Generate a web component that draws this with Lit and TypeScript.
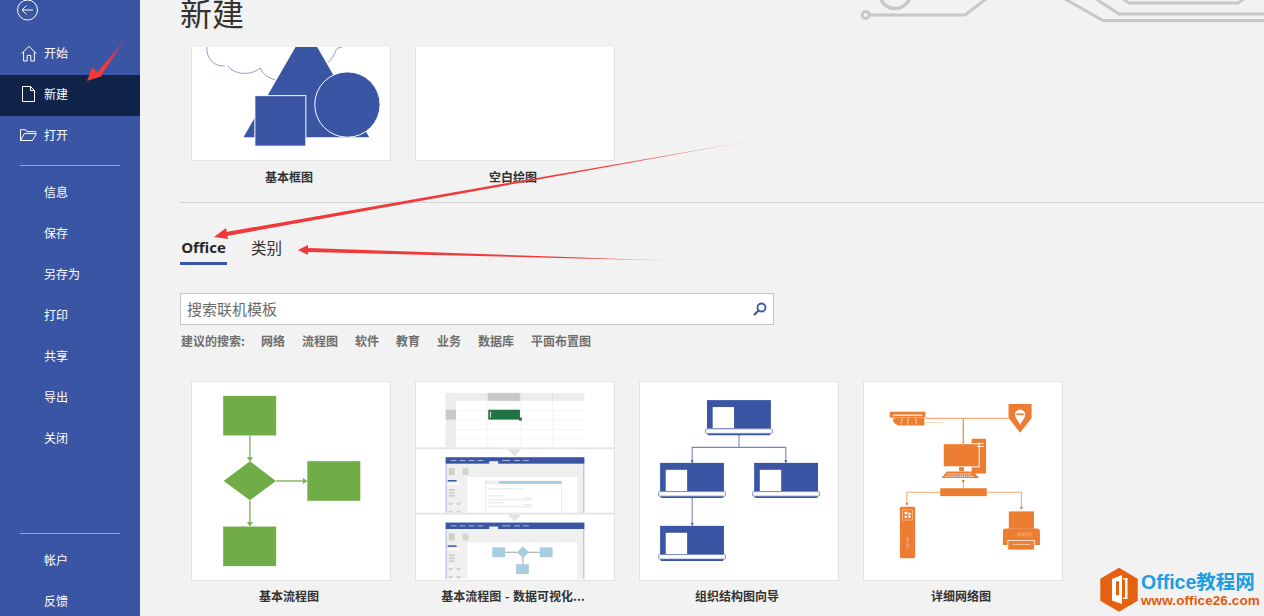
import { LitElement, html, css, svg } from "lit";
import { customElement } from "lit/decorators.js";

const BLUE = "#3955a3";
const GREEN = "#70ad47";
const ORANGE = "#ed7d31";

const homeIcon = svg`<svg width="16" height="17" viewBox="0 0 16 17" fill="none" stroke="#fff" stroke-width="1"><path d="M.7 8.6 8 1.2l7.3 7.4M2.6 7v9h3.6v-5.6h3.6V16h3.6V7"/></svg>`;
const pageIcon = svg`<svg width="13" height="16" viewBox="0 0 13 16" fill="none" stroke="#fff" stroke-width="1"><path d="M.5.5h8l4 4v11H.5zM8.5.5v4h4"/></svg>`;
const openIcon = svg`<svg width="17" height="12" viewBox="0 0 17 12" fill="none" stroke="#fff" stroke-width="1"><path d="M.5 11.5V.7h5l1.3 2h9.4M.5 11.5h12l3.9-6.9H4.3z"/></svg>`;

const flow = svg`<svg viewBox="0 0 200 200" class="art">
  <g fill="${GREEN}">
    <rect x="31.500" y="14" width="53.500" height="40"/>
    <path d="M58.500 80 84.700 100 58.500 119.500 32 100z"/>
    <rect x="116.500" y="80" width="53.500" height="40"/>
    <rect x="31.500" y="146" width="53.500" height="40"/>
    <path d="M55.500 76h6l-3 4.500zM55.500 141.500h6l-3 4.500zM112 97v6l4.500-3z"/>
  </g>
  <path d="M58.500 54v24M58.500 120v24M85 100h29" stroke="#86bb63" stroke-width="1.500" fill="none"/>
</svg>`;

const winPanel = (y: number, content: unknown) => svg`<g transform="translate(0 ${y})">
  <rect x="30" y="0" width="140" height="57" fill="#f0f0f0"/>
  <path d="M30.500 0v57M169.500 0v57" stroke="#aab8de" stroke-width="1"/>
  <rect x="30" y="0" width="140" height="6.500" fill="${BLUE}"/>
  <rect x="74" y="4" width="9" height="3" fill="#f0f0f0"/>
  <path d="M35 3.300h6M44 3.300h6M53 3.300h6M62 3.300h6M87 3.300h8M99 3.300h6M108 3.300h6" stroke="#c6d0ec" stroke-width=".8"/>
  <rect x="33" y="11" width="6" height="7" fill="#cfcfc4"/>
  <rect x="47" y="11" width="6" height="7" fill="#cfd6cc"/>
  <rect x="32" y="23" width="9" height="1.500" fill="${BLUE}"/>
  <rect x="32" y="26" width="12" height="2" fill="#fff"/>
  <path d="M33 33h6M33 36h6M33 39h6M33 47h4M41 47h4M33 55h4M41 55h4" stroke="#d2d2d2" stroke-width="2"/>
  <rect x="52" y="20" width="111" height="37" fill="#fff"/>
  ${content}
</g>`;

const dataViz = svg`<svg viewBox="0 0 200 200" class="art">
  <rect x="30" y="11" width="140" height="8" fill="#ececec"/>
  <rect x="30" y="11" width="10.500" height="55" fill="#ececec"/>
  <rect x="72.500" y="11" width="32.500" height="8" fill="#c8c8c8"/>
  <rect x="30" y="28" width="10.500" height="10" fill="#c8c8c8"/>
  <path d="M105.500 19v47M138 19v47M72.500 19v47M40.500 29h130M40.500 38.500h130M40.500 48h130M40.500 57h130M30 48h10M30 57h10" stroke="#f0f0f0" stroke-width=".7" fill="none"/>
  <path d="M105 11v8M138 11v8" stroke="#d8d8d8" stroke-width=".7"/>
  <rect x="73" y="28" width="32" height="10" fill="#217346"/>
  <rect x="75" y="30" width=".8" height="6" fill="#fff"/>
  <rect x="104" y="36" width="3" height="3" fill="#217346"/>
  <rect x="0" y="66" width="200" height="2" fill="#e6e6e6"/>
  <path d="M92.500 68h14l-7 7z" fill="#e2e2e2"/>
  ${winPanel(76, svg`
    <rect x="70" y="24" width="77" height="33" fill="none" stroke="#e0e0e0" stroke-width=".6"/>
    <rect x="70" y="24" width="77" height="3" fill="#a9cde0"/>
    <rect x="70" y="24" width="14" height="3" fill="#e8f0f5"/>
    <path d="M73 32h35M73 39h16M73 46h16M108 41h9M108 48h9M72 43h45M72 50h45" stroke="#d8d8d8" stroke-width=".7"/>`)}
  <rect x="0" y="132" width="200" height="2" fill="#e6e6e6"/>
  <path d="M92.500 134h14l-7 7z" fill="#e2e2e2"/>
  ${winPanel(142, svg`
    <path d="M90 30h35M108 32v12" stroke="#777" stroke-width=".7"/>
    <g fill="#a9cde0">
      <rect x="77" y="25" width="13" height="10"/>
      <path d="M108 24 114 30 108 36 102 30z"/>
      <rect x="125" y="25" width="13" height="10"/>
      <rect x="101" y="42" width="13" height="10"/>
    </g>`)}
</svg>`;

const orgBox = (x: number, y: number) => svg`<g transform="translate(${x} ${y})">
  <rect x="0" y="0" width="64.500" height="29" fill="${BLUE}"/>
  <rect x="5.700" y="7" width="21.600" height="21.500" fill="#fff"/>
  <rect x=".5" y="31" width="63.500" height="4.500" rx="1" fill="${BLUE}"/>
  <rect x="-1.500" y="29" width="67.500" height="4.600" rx="1" fill="#fff" stroke="#5f78b8" stroke-width=".8"/>
</g>`;

const org = svg`<svg viewBox="0 0 200 200" class="art">
  <path d="M100 52v14M52.700 81V66h94.600v15M52.700 112v32" fill="none" stroke="#6f86bf" stroke-width="1.100"/>
  <path d="M51.200 79h3l-1.500 3zM145.800 79h3l-1.500 3zM51.200 142.500h3l-1.500 3z" fill="${BLUE}"/>
  ${orgBox(67.700, 18.300)}
  ${orgBox(20.300, 81.700)}
  ${orgBox(115.300, 81.700)}
  ${orgBox(20.300, 145.300)}
</svg>`;

const net = svg`<svg viewBox="0 0 200 200" class="art">
  <path d="M62 36.700h84M100.300 36.700V62M100.300 99v8M77 111.300H43.300V122M124 111.300h35v15" fill="none" stroke="#f3a878" stroke-width="1.100"/>
  <path d="M100.300 36.700V62" fill="none" stroke="${ORANGE}" stroke-width=".8"/>
  <g fill="${ORANGE}">
    <circle cx="100.300" cy="62" r="1.300"/><circle cx="100.300" cy="100" r="1.300"/>
    <circle cx="43.300" cy="123" r="1.300"/><circle cx="159" cy="127" r="1.300"/>
    <rect x="26" y="30" width="36" height="6" />
    <path d="M31 36h30v8H35l-4-2-2-3z"/>
    <path d="M146 22.300h23.300v14l-11.600 15-11.700-15z"/>
    <rect x="108.700" y="57.300" width="14.600" height="35" rx="1"/>
    <rect x="80" y="62.300" width="36.300" height="23.400" stroke="#fff" stroke-width="1"/>
    <path d="M96 86h5v4h-5z"/>
    <path d="M83.700 90.500h26.600l6 6.500h-38z"/>
    <rect x="77" y="107.300" width="47" height="8"/>
    <rect x="36.300" y="126" width="15.400" height="52" rx="1.500"/>
    <rect x="146.300" y="130.700" width="25.400" height="17.500"/>
    <path d="M143 148h31.700a3 3 0 0 1 3 3v13.700h-37.400V151a3 3 0 0 1 2.700-3z"/>
    <rect x="145.300" y="160" width="26.700" height="9.700" stroke="#fff" stroke-width=".8"/>
  </g>
  <path d="M29 33.500h30" stroke="#fff" stroke-width="1.200"/>
  <path d="M39 36l-2 7M45 36l-1 7M52 36l1 7" stroke="#fff" stroke-width=".6"/>
  <path d="M62 41h18" stroke="#f6c8a8" stroke-width=".8"/>
  <path d="M152.500 33a5.200 5.200 0 1 1 10.400 0c0 3-3.500 6-5.200 10.500-1.700-4.500-5.200-7.500-5.200-10.500z" fill="#fff"/>
  <rect x="154" y="31.800" width="7.400" height="1.600" fill="${ORANGE}"/>
  <path d="M113 62h8M113 65h8" stroke="#fff" stroke-width="1"/>
  <rect x="82.500" y="64.800" width="31.300" height="18.400" fill="none" stroke="${ORANGE}" stroke-width="1"/>
  <path d="M84 93h25M82 95.300h29" stroke="#fff" stroke-width=".9" stroke-dasharray="1.400 .7"/>
  <rect x="38.700" y="129" width="10.400" height="10.400" fill="none" stroke="#f6c8a8" stroke-width=".7"/>
  <path d="M41 131h3v2.500h-3zM44.800 132h2.500v2h-2.500zM41 135h2.500v2H41zM44.500 135h2.500v2h-2.500z" fill="#fff"/>
  <path d="M44 157v11" stroke="#f3a878" stroke-width="2.500" stroke-dasharray="1 .7"/>
  <g fill="none" stroke="#f6c8a8" stroke-width=".7"><circle cx="157" cy="154" r="1.700"/><circle cx="162" cy="154" r="1.700"/><circle cx="167" cy="154" r="1.700"/></g>
  <path d="M150 164h18" stroke="#fff" stroke-width=".6"/>
</svg>`;

const basic = svg`<svg viewBox="0 0 200 200" class="art">
  <g transform="translate(0 1.500)">
    <path d="M15 84C14 97 23 105 33 104M36 104C42 112 58 115 69 106M69 106C71 112 77 116 84 118M137 101C141 98 144 92 146 87 147 86 150 85 152 85" fill="none" stroke="#6f86bf" stroke-width=".8"/>
    <path d="M115.500 66 179 176H52z" fill="${BLUE}"/>
    <rect x="63.500" y="134" width="51.500" height="51" fill="${BLUE}" stroke="#fff" stroke-width="1"/>
    <circle cx="157" cy="143" r="33" fill="${BLUE}" stroke="#fff" stroke-width="1"/>
  </g>
</svg>`;

const NAV_TOP = [{ t: "开始", i: homeIcon }, { t: "新建", i: pageIcon, active: true }, { t: "打开", i: openIcon }];
const NAV_MID = ["信息", "保存", "另存为", "打印", "共享", "导出", "关闭"];
const NAV_BOT = ["帐户", "反馈"];
const SUGGEST = ["网络", "流程图", "软件", "教育", "业务", "数据库", "平面布置图"];
const CARDS = [
  { t: "基本流程图", a: flow },
  { t: "基本流程图 - 数据可视化...", a: dataViz },
  { t: "组织结构图向导", a: org },
  { t: "详细网络图", a: net },
];

@customElement("app-root")
export class AppRoot extends LitElement {
  static styles = css`
    :host {
      display: flex;
      position: relative;
      width: 100%;
      height: 616px;
      overflow: hidden;
      background: #f2f2f2;
      font-family: "Noto Sans CJK SC", "Noto Sans", sans-serif;
      color: #262626;
    }
    .side {
      width: 140px;
      flex: none;
      height: 616px;
      overflow: hidden;
      background: #3a55a3;
      color: #fff;
      font-size: 12px;
    }
    .back {
      height: 35px;
      padding-left: 17px;
    }
    .back svg {
      display: block;
      margin-top: -1px;
    }
    .item {
      display: flex;
      align-items: center;
      box-sizing: border-box;
      height: 41px;
      padding-left: 44px;
      position: relative;
    }
    .item.top {
      padding-bottom: 4px;
    }
    .item.active {
      background: #10244a;
    }
    .ico {
      position: absolute;
      left: 20px;
      top: 0;
      bottom: 3px;
      width: 17px;
      display: flex;
      align-items: center;
      justify-content: center;
    }
    .rule {
      height: 1px;
      width: 100px;
      margin-left: 20px;
      background: #8ea3e0;
    }
    .rule.a { margin-top: 8px; margin-bottom: 5px; }
    .rule.b { margin-top: 75px; margin-bottom: 5px; }
    .main {
      flex: 1;
      min-width: 0;
      padding-left: 40px;
    }
    h1 {
      margin: -4px 0 0;
      font-size: 32px;
      line-height: 32px;
      font-weight: 400;
      color: #333;
    }
    .gallery {
      display: flex;
      gap: 24px;
      padding-left: 11px;
    }
    .cell { width: 200px; }
    .clip {
      margin-top: 19px;
      height: 114px;
      overflow: hidden;
      display: flex;
      align-items: flex-end;
    }
    .card {
      width: 200px;
      height: 200px;
      flex: none;
      box-sizing: border-box;
      background: #fff;
      border: 1px solid #e3e3e3;
    }
    .clip .card { border-top: 0; }
    .art { display: block; width: 198px; height: 198px; }
    .clip .art { height: 199px; }
    .label {
      box-sizing: border-box;
      padding-right: 4px;
      height: 18px;
      line-height: 18px;
      margin-top: 7px;
      text-align: center;
      font-size: 12px;
      font-weight: 700;
      color: #333;
      white-space: nowrap;
      word-spacing: 1px;
    }
    .lower .label { margin-top: 6px; }
    .hr {
      height: 1px;
      background: #d2d2d2;
      margin-top: 16px;
    }
    .tabs {
      display: flex;
      gap: 24px;
      margin-top: 30px;
      font-size: 15.500px;
    }
    .tab {
      height: 29px;
      line-height: 29px;
      color: #333;
    }
    .tab.on {
      width: 47px;
      text-align: center;
      border-bottom: 3px solid #3a55a3;
      font-family: "Open Sans", "Noto Sans", sans-serif;
      font-size: 15px;
      font-weight: 700;
      color: #262626;
    }
    .search {
      width: 594px;
      height: 32px;
      box-sizing: border-box;
      margin-top: 28px;
      background: #fff;
      border: 1px solid #c6c6c6;
      display: flex;
      align-items: center;
      justify-content: space-between;
      padding: 0 6px;
      font-size: 15px;
      color: #6a6a6a;
    }
    .search span { padding-bottom: 2px; }
    .suggest {
      display: flex;
      gap: 17px;
      margin-top: 7px;
      height: 18px;
      line-height: 18px;
      font-size: 12px;
      font-weight: 700;
      color: #6e6e6e;
      padding-left: 1px;
    }
    .suggest .lead { margin-right: -1px; }
    .lower { margin-top: 31px; }
    .ink {
      position: absolute;
      inset: 0;
      width: 1264px;
      height: 616px;
      pointer-events: none;
    }
    .wm {
      position: absolute;
      left: 1141px;
      top: 570px;
      white-space: nowrap;
    }
    .wm-a {
      font-family: "Liberation Sans", "Noto Sans CJK SC", sans-serif;
      font-size: 19.500px;
      font-weight: 700;
      line-height: 24px;
      color: #1b9fe2;
    }
    .wm-b {
      font-family: "Liberation Sans", sans-serif;
      font-size: 13.500px;
      font-weight: 700;
      line-height: 14px;
      letter-spacing: .1px;
      color: #e2590f;
    }
  `;

  render() {
    return html`
      <nav class="side">
        <div class="back">
          <svg width="21" height="22" viewBox="0 0 21 22" fill="none" stroke="#fff" stroke-width="1">
            <circle cx="10.500" cy="11" r="10"/><path d="M5 11h11M9.500 6.500 5 11l4.500 4.500"/>
          </svg>
        </div>
        ${NAV_TOP.map((n) => html`<div class="item top ${n.active ? "active" : ""}"><span class="ico">${n.i}</span>${n.t}</div>`)}
        <div class="rule a"></div>
        ${NAV_MID.map((t) => html`<div class="item">${t}</div>`)}
        <div class="rule b"></div>
        ${NAV_BOT.map((t) => html`<div class="item">${t}</div>`)}
      </nav>
      <main class="main">
        <h1>新建</h1>
        <div class="gallery">
          <div class="cell"><div class="clip"><div class="card">${basic}</div></div><div class="label">基本框图</div></div>
          <div class="cell"><div class="clip"><div class="card"></div></div><div class="label">空白绘图</div></div>
        </div>
        <div class="hr"></div>
        <div class="tabs"><div class="tab on">Office</div><div class="tab">类别</div></div>
        <div class="search">
          <span>搜索联机模板</span>
          <svg width="14" height="14" viewBox="0 0 14 14" fill="none" stroke="#3a55a3">
            <circle cx="8.500" cy="5.500" r="4" stroke-width="1.800"/><path d="M5.500 8.500 1 13" stroke-width="2.200"/>
          </svg>
        </div>
        <div class="suggest"><span class="lead">建议的搜索:</span>${SUGGEST.map((s) => html`<span>${s}</span>`)}</div>
        <div class="gallery lower">
          ${CARDS.map((c) => html`<div class="cell"><div class="card">${c.a}</div><div class="label">${c.t}</div></div>`)}
        </div>
      </main>

      <svg class="ink" viewBox="0 0 1264 616" fill="none">
        <defs>
          <linearGradient id="f1" gradientUnits="userSpaceOnUse" x1="130" y1="33" x2="105" y2="62"><stop offset="0" stop-color="#f03a3a" stop-opacity="0"/><stop offset="1" stop-color="#f03a3a"/></linearGradient>
          <linearGradient id="f2" gradientUnits="userSpaceOnUse" x1="790" y1="134" x2="600" y2="168"><stop offset="0" stop-color="#f03a3a" stop-opacity="0"/><stop offset="1" stop-color="#f03a3a"/></linearGradient>
          <linearGradient id="f3" gradientUnits="userSpaceOnUse" x1="690" y1="261" x2="580" y2="258"><stop offset="0" stop-color="#f03a3a" stop-opacity="0"/><stop offset="1" stop-color="#f03a3a"/></linearGradient>
        </defs>
        <g stroke="#c8c8c8" stroke-width="3">
          <circle cx="865.700" cy="15" r="3.500"/>
          <path d="M869 15h96l21-16"/>
          <circle cx="895" cy="-7" r="15.500" stroke-width="3.500"/>
          <path d="M1065-1l38 21.500h161M1096-1l23 15h145M1123-1l6 4h109l6-4"/>
        </g>
        <path d="M130 33 96 74l4 3z" fill="url(#f1)"/>
        <path d="M87 81l5-14 10 9z" fill="#f03a3a"/>
        <path d="M778 136 226 232l1 4z" fill="url(#f2)"/>
        <path d="M214 237l12-9 2 11z" fill="#f03a3a"/>
        <path d="M682 261 308 248l0 4z" fill="url(#f3)"/>
        <path d="M298 250l10-5v10z" fill="#f03a3a"/>
        <path d="M1119 567.700l18.700 11v22l-18.700 11-18.700-11v-22z" fill="#e5600f"/>
        <path d="M1112 579l10-4v29l-10-3.500zM1116 581.500v13.500l3 .5v-14.500zM1123 578h4.500v21H1123v-1.500h2v-18h-2z" fill="#fff" fill-rule="evenodd"/>
      </svg>
      <div class="wm">
        <div class="wm-a">Office教程网</div>
        <div class="wm-b">www.office26.com</div>
      </div>
    `;
  }
}
